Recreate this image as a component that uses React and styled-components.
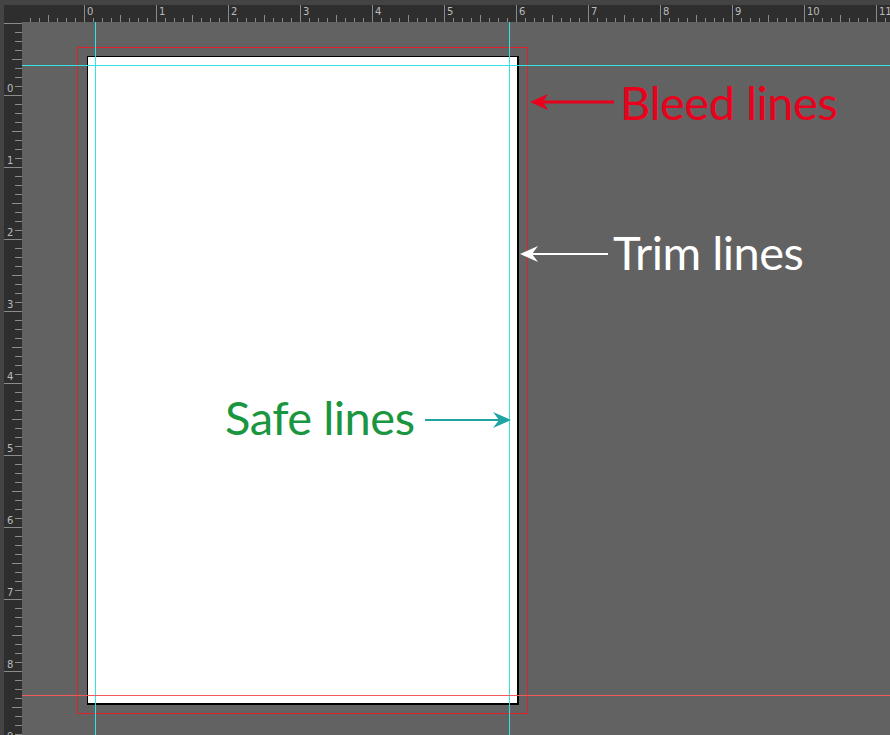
import React from 'react';
import styled, { createGlobalStyle } from 'styled-components';

const Global = createGlobalStyle`
  html, body { margin: 0; padding: 0; background: #626262; overflow: hidden; }
  body { font-family: Lato, "Liberation Sans", sans-serif; }
`;

const Window = styled.div`
  width: 890px;
  height: 735px;
  display: grid;
  grid-template-columns: 22px 1fr;
  grid-template-rows: 22px 1fr;
  background: #626262;
  overflow: hidden;
`;

const Corner = styled.div`
  background: #2e2e2e;
  border-top: 5px solid #444;
  border-left: 4px solid #444;
`;

const RulerBox = styled.div`
  background: #2e2e2e;
  overflow: hidden;
  ${p => p.$top ? 'border-top: 5px solid #444;' : 'border-left: 4px solid #444;'}
`;

const Canvas = styled.div`
  position: relative;
  overflow: hidden;
`;

// canvas offsets: origin at (22,22)
const Bleed = styled.div`
  position: absolute;
  left: 55px; top: 25px; width: 449px; height: 665px;
  border: 1px solid #e0202a;
`;

const Page = styled.div`
  position: absolute;
  left: 65px; top: 34px; width: 429px; height: 646px;
  background: #fff;
  border-left: 1px solid #000;
  border-top: 1px solid #000;
  border-right: 2px solid #000;
  border-bottom: 2px solid #000;
`;

const Guide = styled.div`
  position: absolute;
  background: ${p => p.$color};
  ${p => p.$vertical
    ? `left: ${p.$at}px; top: 0; bottom: 0; width: 1px;`
    : `top: ${p.$at}px; left: 0; right: 0; height: 1px;`}
`;

const Label = styled.div`
  position: absolute;
  left: ${p => p.$x}px;
  top: ${p => p.$y}px;
  color: ${p => p.$color};
  font-size: 47px;
  line-height: 1;
  letter-spacing: -0.5px;
  white-space: nowrap;
`;

const Arrow = styled.svg`
  position: absolute;
  left: ${p => p.$x}px;
  top: ${p => p.$y}px;
  overflow: visible;
`;

function TopRuler() {
  const ticks = [];
  for (let i = 0; i < 100; i++) {
    const x = 62 + i * 9 - 72;
    const major = i % 8 === 0;
    const half = i % 4 === 0;
    ticks.push(<line key={i} x1={x + 0.5} x2={x + 0.5} y1={major ? 0 : half ? 10 : 13} y2={17} stroke="#8a8a8a" strokeWidth="1" />);
    if (major) {
      const n = i / 8 - 1;
      if (n >= 0) ticks.push(<text key={'t' + i} x={x + 3} y={10} fill="#bbb" fontSize="10" fontFamily="DejaVu Sans, sans-serif">{n}</text>);
    }
  }
  return <svg width="868" height="17">{ticks}</svg>;
}

function LeftRuler() {
  const ticks = [];
  for (let i = 0; i < 90; i++) {
    const y = 1 + i * 9;
    const major = i % 8 === 0;
    const half = i % 4 === 0;
    ticks.push(<line key={i} y1={y + 0.5} y2={y + 0.5} x1={major ? 0 : half ? 8 : 11} x2={18} stroke="#8a8a8a" strokeWidth="1" />);
    if (major) {
      const n = i / 8 - 1;
      if (n >= 0) ticks.push(<text key={'t' + i} x={3} y={y - 3} fill="#bbb" fontSize="10" fontFamily="DejaVu Sans, sans-serif">{n}</text>);
    }
  }
  return <svg width="18" height="713">{ticks}</svg>;
}

export default function App() {
  return (
    <>
      <Global />
      <Window>
        <Corner />
        <RulerBox $top><TopRuler /></RulerBox>
        <RulerBox><LeftRuler /></RulerBox>
        <Canvas>
          <Bleed />
          <Page />
          <Guide $vertical $at={73} $color="#33e3e6" />
          <Guide $vertical $at={487} $color="#33e3e6" />
          <Guide $at={43} $color="#33e3e6" />
          <Guide $at={673} $color="#f05a5a" />

          <Arrow $x={508} $y={72} width="84" height="16">
            <line x1="8" y1="8" x2="84" y2="8" stroke="#e8001c" strokeWidth="3" />
            <polygon points="0,8 18,0 13,8 18,16" fill="#e8001c" />
          </Arrow>
          <Label $x={598} $y={57} $color="#e8001c">Bleed lines</Label>

          <Arrow $x={498} $y={224} width="88" height="16">
            <line x1="8" y1="8" x2="88" y2="8" stroke="#fff" strokeWidth="2" />
            <polygon points="0,8 18,0 12,8 18,16" fill="#fff" />
          </Arrow>
          <Label $x={591} $y={207} $color="#ffffff">Trim lines</Label>

          <Arrow $x={403} $y={390} width="86" height="16">
            <line x1="0" y1="8" x2="78" y2="8" stroke="#1fa3a3" strokeWidth="2" />
            <polygon points="86,8 68,0 74,8 68,16" fill="#1fa3a3" />
          </Arrow>
          <Label $x={203} $y={372} $color="#1a9640">Safe lines</Label>
        </Canvas>
      </Window>
    </>
  );
}
